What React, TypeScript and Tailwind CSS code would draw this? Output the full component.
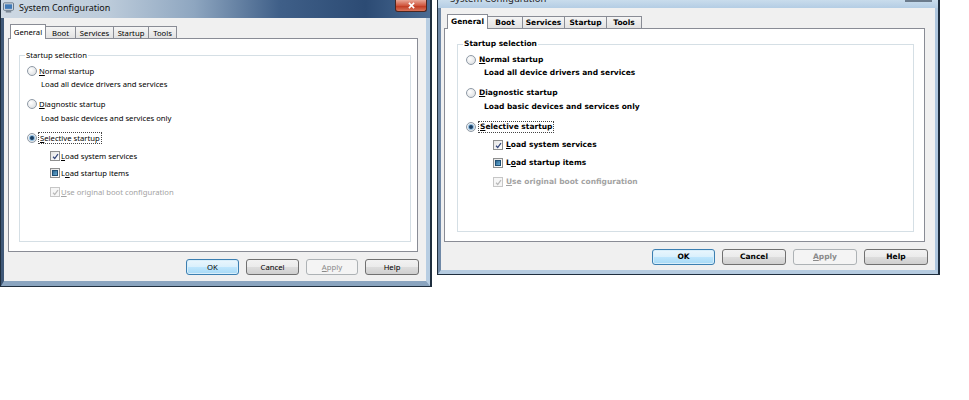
import React from "react";

type Mode = "check" | "mixed" | "off";

function Radio({ on }: { on?: boolean }) {
  return (
    <span className="flex h-[10px] w-[10px] shrink-0 items-center justify-center rounded-full border border-[#8f9aa6] bg-[radial-gradient(circle_at_35%_35%,#ffffff,#d6d9dc)]">
      {on && <span className="h-[4px] w-[4px] rounded-full bg-[#1b3f63] shadow-[0_0_0_1px_#8fbde2]" />}
    </span>
  );
}

function Box({ mode }: { mode: Mode }) {
  const dis = mode === "off";
  return (
    <span
      className={`flex h-[10px] w-[10px] shrink-0 items-center justify-center border ${
        dis ? "border-[#c6c6c6] bg-[#f6f6f6]" : "border-[#8e8f8f] bg-[linear-gradient(135deg,#e4e4e4,#ffffff)]"
      }`}
    >
      {mode === "mixed" ? (
        <span className="h-[6px] w-[6px] border border-[#1f4f74] bg-[linear-gradient(135deg,#2c6590,#67acd4)]" />
      ) : (
        <svg viewBox="0 0 8 8" className="h-[7px] w-[7px]">
          <path d="M1.2 4.3 L3.1 6.3 L6.8 1.3" fill="none" stroke={dis ? "#b9b9b9" : "#33467a"} strokeWidth="1.4" />
        </svg>
      )}
    </span>
  );
}

function SysIcon() {
  return (
    <svg viewBox="0 0 12 12" className="h-[11px] w-[11px]">
      <rect x="0.5" y="1" width="11" height="8" rx="1" fill="#dfe6ee" stroke="#5b6b7d" />
      <rect x="2" y="2.5" width="8" height="5" fill="#3f78b5" />
      <rect x="3" y="9.5" width="6" height="2" fill="#7c8896" />
    </svg>
  );
}

const btnNormal =
  "border border-[#707070] bg-[linear-gradient(#f2f2f2_0%,#ebebeb_50%,#dddddd_51%,#cfcfcf_100%)]";
const btnDefault =
  "border border-[#3c7fb1] bg-[linear-gradient(#eaf6fd_0%,#d9f0fc_50%,#bee6fd_51%,#a7d9f5_100%)] shadow-[inset_0_0_0_1px_#d8eefa]";
const btnOff = "border border-[#adb2b5] bg-[#f4f4f4] text-[#8a8a8a]";

const tabOn = "relative z-10 -mb-px h-[15px] border border-b-0 border-[#898c95] bg-white";
const tabOff =
  "-ml-px h-[12px] border border-b-0 border-[#898c95] bg-[linear-gradient(#f5f5f5,#e2e2e2)] first:ml-0";

function LeftDialog() {
  const tabs: [string, string][] = [
    ["Boot", "w-[31px]"],
    ["Services", "w-[39px]"],
    ["Startup", "w-[36px]"],
    ["Tools", "w-[29px]"],
  ];
  return (
    <div className="flex h-[287px] w-[432px] shrink-0 flex-col border-b border-l border-r-2 border-[#1f2e3e] font-['Noto_Sans',sans-serif] text-[7.7px] leading-[12px] text-black">
      {/* title bar */}
      <div className="flex h-[18px] items-start bg-[linear-gradient(90deg,#cdd8e3_0%,#bccbda_25%,#8ea6c0_45%,#3f5f88_65%,#2c4b74_85%,#4a6b93_100%)]">
        <div className="flex h-[15px] items-center gap-[5px] pl-[2px]">
          <SysIcon />
          <span className="text-[9px] text-[#111]">System Configuration</span>
        </div>
        <div className="ml-auto mr-[3px] flex h-[12px] w-[32px] items-center justify-center rounded-b-[3px] border border-t-0 border-[#4c2620] bg-[linear-gradient(#e9a797,#d0573f_50%,#c03a22_55%,#d9745a)]">
          <svg viewBox="0 0 8 8" className="h-[7px] w-[7px]">
            <path d="M1 1 L7 7 M7 1 L1 7" stroke="#fff" strokeWidth="1.8" />
          </svg>
        </div>
      </div>
      {/* frame */}
      <div className="flex flex-1 flex-col border-b-[5px] border-l-[3px] border-r-[4px] border-b-[#8aa4bf] border-l-[#3f5877] border-r-[#b7cde2]">
        <div className="flex flex-1 flex-col bg-[#f0f0f0] pt-[6px]">
          <div className="flex h-[14px] items-end pl-[6px]">
            <div className={`${tabOn} flex w-[36px] items-center justify-center`}>General</div>
            {tabs.map(([t, w]) => (
              <div key={t} className={`${tabOff} ${w} flex items-center justify-center`}>
                {t}
              </div>
            ))}
          </div>
          <div className="ml-[4px] h-[214px] w-[410px] border border-[#898c95] bg-white">
            <fieldset className="ml-[10px] mt-[10px] h-[193px] w-[392px] border border-[#d5dfe5]">
              <legend className="ml-[5px] px-[1px] leading-[12px]">Startup selection</legend>
              <div className="flex flex-col pt-[4px]">
                <div className="flex h-[12px] items-center pl-[7px]">
                  <Radio />
                  <span className="ml-[2px]"><u>N</u>ormal startup</span>
                </div>
                <div className="mt-[1px] h-[12px] pl-[21px]">Load all device drivers and services</div>
                <div className="mt-[8px] flex h-[12px] items-center pl-[7px]">
                  <Radio />
                  <span className="ml-[2px]"><u>D</u>iagnostic startup</span>
                </div>
                <div className="mt-[2px] h-[12px] pl-[21px]">Load basic devices and services only</div>
                <div className="mt-[8px] flex h-[12px] items-center pl-[7px]">
                  <Radio on />
                  <span className="ml-[1px] border border-dotted border-[#444] px-[1px] leading-[10px]"><u>S</u>elective startup</span>
                </div>
                <div className="mt-[6px] flex h-[12px] items-center pl-[30px]">
                  <Box mode="check" />
                  <span className="ml-[1px]"><u>L</u>oad system services</span>
                </div>
                <div className="mt-[5px] flex h-[12px] items-center pl-[30px]">
                  <Box mode="mixed" />
                  <span className="ml-[1px]">L<u>o</u>ad startup items</span>
                </div>
                <div className="mt-[7px] flex h-[12px] items-center pl-[30px] text-[#a3a3a3]">
                  <Box mode="off" />
                  <span className="ml-[1px]"><u>U</u>se original boot configuration</span>
                </div>
              </div>
            </fieldset>
          </div>
          <div className="mt-[7px] flex h-[16px] gap-[7px] pl-[182px]">
            <div className={`${btnDefault} flex w-[53px] items-center justify-center rounded-[3px]`}>OK</div>
            <div className={`${btnNormal} flex w-[53px] items-center justify-center rounded-[3px]`}>Cancel</div>
            <div className={`${btnOff} flex w-[52px] items-center justify-center rounded-[3px]`}><u>A</u>pply</div>
            <div className={`${btnNormal} flex w-[54px] items-center justify-center rounded-[3px]`}>Help</div>
          </div>
        </div>
      </div>
    </div>
  );
}

function RightDialog() {
  const tabs: [string, string][] = [
    ["Boot", "w-[36px]"],
    ["Services", "w-[43px]"],
    ["Startup", "w-[43px]"],
    ["Tools", "w-[36px]"],
  ];
  return (
    <div className="flex h-[275px] w-[503px] shrink-0 flex-col border-b border-l border-r-2 border-[#1f2e3e] font-['DejaVu_Sans',sans-serif] text-[7.5px] font-bold leading-[12px] text-black">
      {/* title bar, cut off at the top */}
      <div className="flex h-[8px] items-start overflow-hidden bg-[linear-gradient(#c9dcec,#b4cde4)]">
        <div className="-mt-[8px] flex h-[14px] items-center pl-[12px] font-['Noto_Sans',sans-serif] text-[9.5px] font-normal text-[#222]">
          System Configuration
        </div>
        <div className="ml-auto mr-[6px] h-[2px] w-[27px] bg-[#6b7b8c]" />
      </div>
      {/* frame */}
      <div className="flex flex-1 flex-col border-b-[4px] border-l-[3px] border-r-[3px] border-b-[#b5cbe0] border-l-[#6f88a6] border-r-[#aec6de]">
        <div className="flex flex-1 flex-col bg-[#f0f0f0] pt-[6px]">
          <div className="flex h-[14px] items-end pl-[6px]">
            <div className={`${tabOn} flex w-[41px] items-center justify-center`}>General</div>
            {tabs.map(([t, w]) => (
              <div key={t} className={`${tabOff} ${w} flex items-center justify-center`}>
                {t}
              </div>
            ))}
          </div>
          <div className="ml-[3px] h-[214px] w-[481px] border border-[#898c95] bg-white">
            <fieldset className="ml-[12px] mt-[9px] h-[194px] w-[457px] border border-[#d5dfe5]">
              <legend className="ml-[5px] px-[1px] leading-[12px]">Startup selection</legend>
              <div className="flex flex-col pt-[4px]">
                <div className="flex h-[12px] items-center pl-[8px]">
                  <Radio />
                  <span className="ml-[3px]"><u>N</u>ormal startup</span>
                </div>
                <div className="mt-[1px] h-[12px] pl-[26px]">Load all device drivers and services</div>
                <div className="mt-[8px] flex h-[12px] items-center pl-[8px]">
                  <Radio />
                  <span className="ml-[3px]"><u>D</u>iagnostic startup</span>
                </div>
                <div className="mt-[2px] h-[12px] pl-[26px]">Load basic devices and services only</div>
                <div className="mt-[8px] flex h-[12px] items-center pl-[8px]">
                  <Radio on />
                  <span className="ml-[2px] border border-dotted border-[#444] px-[1px] leading-[10px]"><u>S</u>elective startup</span>
                </div>
                <div className="mt-[6px] flex h-[12px] items-center pl-[35px]">
                  <Box mode="check" />
                  <span className="ml-[3px]"><u>L</u>oad system services</span>
                </div>
                <div className="mt-[6px] flex h-[12px] items-center pl-[35px]">
                  <Box mode="mixed" />
                  <span className="ml-[3px]">L<u>o</u>ad startup items</span>
                </div>
                <div className="mt-[7px] flex h-[12px] items-center pl-[35px] text-[#a3a3a3]">
                  <Box mode="off" />
                  <span className="ml-[3px]"><u>U</u>se original boot configuration</span>
                </div>
              </div>
            </fieldset>
          </div>
          <div className="mt-[7px] flex h-[16px] gap-[7px] pl-[211px]">
            <div className={`${btnDefault} flex w-[63px] items-center justify-center rounded-[3px]`}>OK</div>
            <div className={`${btnNormal} flex w-[64px] items-center justify-center rounded-[3px]`}>Cancel</div>
            <div className={`${btnOff} flex w-[64px] items-center justify-center rounded-[3px]`}><u>A</u>pply</div>
            <div className={`${btnNormal} flex w-[64px] items-center justify-center rounded-[3px]`}>Help</div>
          </div>
        </div>
      </div>
    </div>
  );
}

export default function App() {
  return (
    <div className="flex h-[400px] w-[969px] items-start gap-[5px] overflow-hidden bg-white">
      <LeftDialog />
      <RightDialog />
    </div>
  );
}
